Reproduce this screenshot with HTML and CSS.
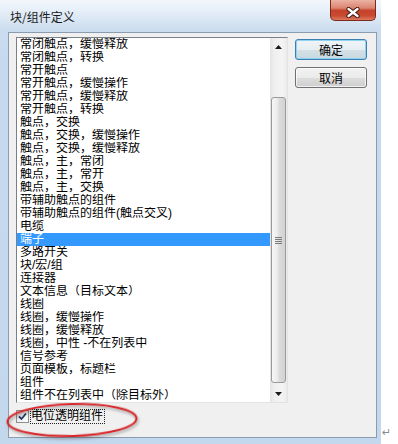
FILE: index.html
```html
<!DOCTYPE html>
<html lang="zh">
<head>
<meta charset="utf-8">
<title>块/组件定义</title>
<link rel="stylesheet" href="styles.css">
</head>
<body>
<div class="page">
  <div class="window">
    <div class="titlebar">
      <span class="title">块/组件定义</span>
      <div class="close">
        <svg width="14" height="11" viewBox="0 0 14 11">
          <path d="M2.5 2 L11.5 9 M11.5 2 L2.5 9" stroke="#3b1610" stroke-width="4.2" stroke-linecap="round" fill="none"/>
          <path d="M2.5 2 L11.5 9 M11.5 2 L2.5 9" stroke="#ffffff" stroke-width="2.4" stroke-linecap="round" fill="none"/>
        </svg>
      </div>
    </div>
    <div class="client">
      <div class="listbox">
        <ul class="items">
          <li>常闭触点，缓慢释放</li>
          <li>常闭触点，转换</li>
          <li>常开触点</li>
          <li>常开触点，缓慢操作</li>
          <li>常开触点，缓慢释放</li>
          <li>常开触点，转换</li>
          <li>触点，交换</li>
          <li>触点，交换，缓慢操作</li>
          <li>触点，交换，缓慢释放</li>
          <li>触点，主，常闭</li>
          <li>触点，主，常开</li>
          <li>触点，主，交换</li>
          <li>带辅助触点的组件</li>
          <li>带辅助触点的组件(触点交叉)</li>
          <li>电缆</li>
          <li class="sel">端子</li>
          <li>多路开关</li>
          <li>块/宏/组</li>
          <li>连接器</li>
          <li>文本信息（目标文本）</li>
          <li>线圈</li>
          <li>线圈，缓慢操作</li>
          <li>线圈，缓慢释放</li>
          <li>线圈，中性 -不在列表中</li>
          <li>信号参考</li>
          <li>页面模板，标题栏</li>
          <li>组件</li>
          <li>组件不在列表中（除目标外）</li>
        </ul>
        <div class="scrollbar">
          <div class="sb-btn">
            <svg width="7" height="4" viewBox="0 0 7 4"><polygon points="3.5,0 7,4 0,4" fill="#1a1a1a"/></svg>
          </div>
          <div class="sb-track">
            <div class="sb-thumb">
              <svg width="7" height="7" viewBox="0 0 7 7">
                <path d="M0 0.5 H7 M0 2.5 H7 M0 4.5 H7 M0 6.5 H7" stroke="#7a7a7a" stroke-width="1"/>
              </svg>
            </div>
          </div>
          <div class="sb-btn">
            <svg width="7" height="4" viewBox="0 0 7 4"><polygon points="0,0 7,0 3.5,4" fill="#1a1a1a"/></svg>
          </div>
        </div>
      </div>
      <div class="buttons">
        <button class="btn btn-default">确定</button>
        <button class="btn">取消</button>
      </div>
      <div class="check">
        <span class="box">
          <svg width="11" height="11" viewBox="0 0 11 11">
            <path d="M2 5.5 L4.5 8 L9 2.5" stroke="#23365e" stroke-width="1.8" fill="none"/>
          </svg>
        </span>
        <span class="label">电位透明组件</span>
      </div>
      <svg class="mark" width="138" height="40" viewBox="0 0 138 40">
        <ellipse cx="67" cy="19" rx="64.5" ry="16" fill="none" stroke="#d8262a" stroke-width="2"/>
      </svg>
    </div>
  </div>
  <div class="aside"><span class="para">↵</span></div>
</div>
</body>
</html>
```
FILE: styles.css
```css
body {
  margin: 0;
  background: #ffffff;
  font-family: "Noto Sans CJK SC", "Liberation Sans", sans-serif;
  font-size: 12px;
  color: #000;
}

.page {
  display: flex;
  width: 398px;
  height: 444px;
  overflow: hidden;
}

.window {
  width: 381px;
  height: 444px;
  flex: none;
  display: flex;
  flex-direction: column;
  background: linear-gradient(to bottom, #f3f7fc 0, #e2ecf7 14px, #cbdcef 30px, #c6d9ee 60px, #c4d8ed 100%);
}

.titlebar {
  height: 32px;
  flex: none;
  display: flex;
  justify-content: space-between;
  align-items: flex-start;
  padding: 0 5px 0 10px;
}

.title {
  margin-top: 10px;
  line-height: 14px;
  font-size: 12px;
  color: #1b1b1b;
}

.close {
  width: 46px;
  height: 21px;
  box-sizing: border-box;
  border: 1px solid #7a2a1d;
  border-top: none;
  border-radius: 0 0 5px 5px;
  background: linear-gradient(to bottom, #eab2a4 0, #dc8570 40%, #c5432b 52%, #c94a31 78%, #dc7a5f 100%);
  display: flex;
  justify-content: center;
  align-items: flex-start;
  padding-top: 7px;
}

.client {
  margin: 0 4px 0 8px;
  height: 406px;
  box-sizing: border-box;
  border: 1px solid #8b9bb0;
  background: #f0f0f0;
  position: relative;
  display: grid;
  grid-template-columns: 272px 72px;
  column-gap: 7px;
  align-items: start;
  align-content: start;
  padding: 4px 0 0 7px;
}

.listbox {
  width: 272px;
  height: 366px;
  box-sizing: border-box;
  border: 1px solid;
  border-color: #7a7f88 #e3e3e3 #e3e3e3 #7a7f88;
  background: #ffffff;
  display: flex;
}

.items {
  list-style: none;
  margin: 0;
  padding: 0;
  width: 253px;
  flex: none;
  font-family: "Liberation Sans", "Noto Sans CJK SC", sans-serif;
}

.items li {
  height: 13px;
  line-height: 13px;
  padding-left: 3px;
  white-space: nowrap;
  color: #000;
  overflow: hidden;
}

.items li.sel {
  background: #3399ff;
  color: #ffffff;
}

.scrollbar {
  width: 17px;
  flex: none;
  display: flex;
  flex-direction: column;
  background: linear-gradient(to right, #e3e3e3 0, #efefef 25%, #f4f4f4 70%, #ebebeb 100%);
}

.sb-btn {
  height: 17px;
  flex: none;
  display: flex;
  align-items: center;
  justify-content: center;
}

.sb-track {
  flex: 1;
  padding-top: 42px;
}

.sb-thumb {
  margin: 0 1px;
  height: 286px;
  box-sizing: border-box;
  border: 1px solid #9a9a9a;
  border-radius: 3px;
  background: linear-gradient(to right, #f6f6f6 0, #ececec 40%, #dcdcdc 55%, #d2d2d2 100%);
  display: flex;
  align-items: center;
  justify-content: center;
}

.buttons {
  display: flex;
  flex-direction: column;
  gap: 7px;
  margin-top: 2px;
}

.btn {
  width: 72px;
  height: 21px;
  box-sizing: border-box;
  padding: 0;
  border: 1px solid #707070;
  border-radius: 3px;
  background: linear-gradient(to bottom, #f2f2f2 0, #ebebeb 50%, #dddddd 51%, #cfcfcf 100%);
  font-family: "Noto Sans CJK SC", sans-serif;
  font-size: 12px;
  line-height: 18px;
  color: #000;
  box-shadow: inset 0 0 0 1px rgba(255, 255, 255, 0.7);
}

.btn-default {
  border-color: #3c7fb1;
  box-shadow: inset 0 0 0 1px #8fd3f3;
  background: linear-gradient(to bottom, #f0f4f6 0, #e6eef2 50%, #d5e1e7 51%, #c9d8df 100%);
}

.check {
  grid-column: 1 / -1;
  margin-top: 6px;
  display: flex;
  align-items: center;
  gap: 1px;
  height: 15px;
}

.box {
  width: 13px;
  height: 13px;
  box-sizing: border-box;
  border: 1px solid #8e8f8f;
  background: linear-gradient(135deg, #dcdcdc 0, #f4f4f4 60%, #ffffff 100%);
  display: flex;
}

.label {
  border: 1px dotted #222;
  padding: 0 1px 0 0;
  line-height: 13px;
  height: 13px;
  font-family: "Liberation Sans", "Noto Sans CJK SC", sans-serif;
}

.mark {
  position: absolute;
  left: -4px;
  top: 368px;
  transform: rotate(-1.5deg);
  filter: drop-shadow(1px 2px 1.5px rgba(0, 0, 0, 0.35));
}

.aside {
  flex: 1;
  display: flex;
  align-items: flex-end;
  padding: 0 0 6px 1px;
}

.para {
  font-family: "DejaVu Sans", sans-serif;
  font-size: 11px;
  line-height: 11px;
  color: #8a8a8a;
}
```
